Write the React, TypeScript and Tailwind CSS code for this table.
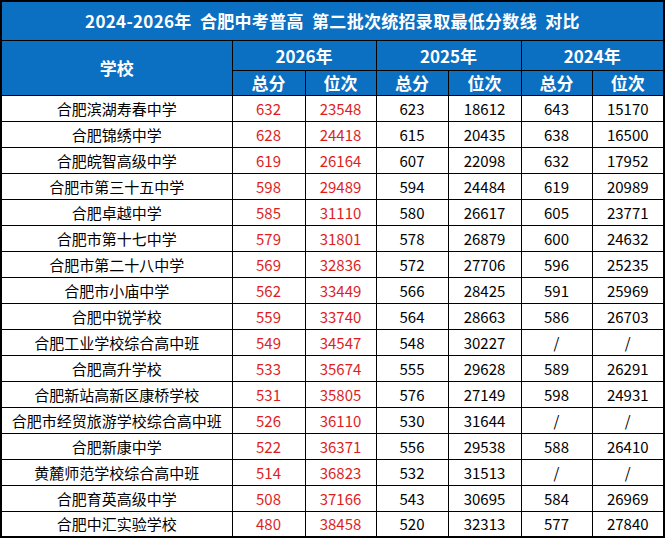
import React from "react";

const rows: [string, string, string, string, string, string, string][] = [
  ["合肥滨湖寿春中学", "632", "23548", "623", "18612", "643", "15170"],
  ["合肥锦绣中学", "628", "24418", "615", "20435", "638", "16500"],
  ["合肥皖智高级中学", "619", "26164", "607", "22098", "632", "17952"],
  ["合肥市第三十五中学", "598", "29489", "594", "24484", "619", "20989"],
  ["合肥卓越中学", "585", "31110", "580", "26617", "605", "23771"],
  ["合肥市第十七中学", "579", "31801", "578", "26879", "600", "24632"],
  ["合肥市第二十八中学", "569", "32836", "572", "27706", "596", "25235"],
  ["合肥市小庙中学", "562", "33449", "566", "28425", "591", "25969"],
  ["合肥中锐学校", "559", "33740", "564", "28663", "586", "26703"],
  ["合肥工业学校综合高中班", "549", "34547", "548", "30227", "/", "/"],
  ["合肥高升学校", "533", "35674", "555", "29628", "589", "26291"],
  ["合肥新站高新区康桥学校", "531", "35805", "576", "27149", "598", "24931"],
  ["合肥市经贸旅游学校综合高中班", "526", "36110", "530", "31644", "/", "/"],
  ["合肥新康中学", "522", "36371", "556", "29538", "588", "26410"],
  ["黄麓师范学校综合高中班", "514", "36823", "532", "31513", "/", "/"],
  ["合肥育英高级中学", "508", "37166", "543", "30695", "584", "26969"],
  ["合肥中汇实验学校", "480", "38458", "520", "32313", "577", "27840"],
];

const font = { fontFamily: '"Noto Sans CJK SC", "Noto Sans", sans-serif' };

export default function App() {
  return (
    <div className="w-[665px] h-[539px] bg-white overflow-hidden" style={font}>
      <table className="border-collapse table-fixed w-[664px] border-2 border-black">
        <colgroup>
          <col className="w-[231px]" />
          <col className="w-[73px]" />
          <col className="w-[71px]" />
          <col className="w-[72px]" />
          <col className="w-[73px]" />
          <col className="w-[71px]" />
          <col className="w-[72px]" />
        </colgroup>
        <thead>
          <tr className="h-[39px] bg-[#0b6fc2]">
            <th
              colSpan={7}
              className="p-0 border border-black text-white text-[17px] font-bold tracking-[0.3px] leading-none"
            >
              2024-2026年&nbsp;&nbsp;合肥中考普高&nbsp;&nbsp;第二批次统招录取最低分数线&nbsp;&nbsp;对比
            </th>
          </tr>
          <tr className="h-[30px] bg-[#0b6fc2] text-white text-[17px] font-bold leading-none">
            <th rowSpan={2} className="p-0 border border-black">学校</th>
            <th colSpan={2} className="p-0 border border-black">2026年</th>
            <th colSpan={2} className="p-0 border border-black">2025年</th>
            <th colSpan={2} className="p-0 border border-black">2024年</th>
          </tr>
          <tr className="h-[25px] bg-[#0b6fc2] text-white text-[17px] font-bold leading-none">
            {["总分", "位次", "总分", "位次", "总分", "位次"].map((t, i) => (
              <th key={i} className="p-0 border border-black">{t}</th>
            ))}
          </tr>
        </thead>
        <tbody>
          {rows.map((r, i) => (
            <tr key={i} className="h-[26px] text-[15px] leading-none">
              <td className="p-0 border border-black text-center text-black">{r[0]}</td>
              <td className="p-0 border border-black text-center text-[#dd1e1e]">{r[1]}</td>
              <td className="p-0 border border-black text-center text-[#dd1e1e]">{r[2]}</td>
              <td className="p-0 border border-black text-center text-black">{r[3]}</td>
              <td className="p-0 border border-black text-center text-black">{r[4]}</td>
              <td className="p-0 border border-black text-center text-black">{r[5]}</td>
              <td className="p-0 border border-black text-center text-black">{r[6]}</td>
            </tr>
          ))}
        </tbody>
      </table>
    </div>
  );
}
